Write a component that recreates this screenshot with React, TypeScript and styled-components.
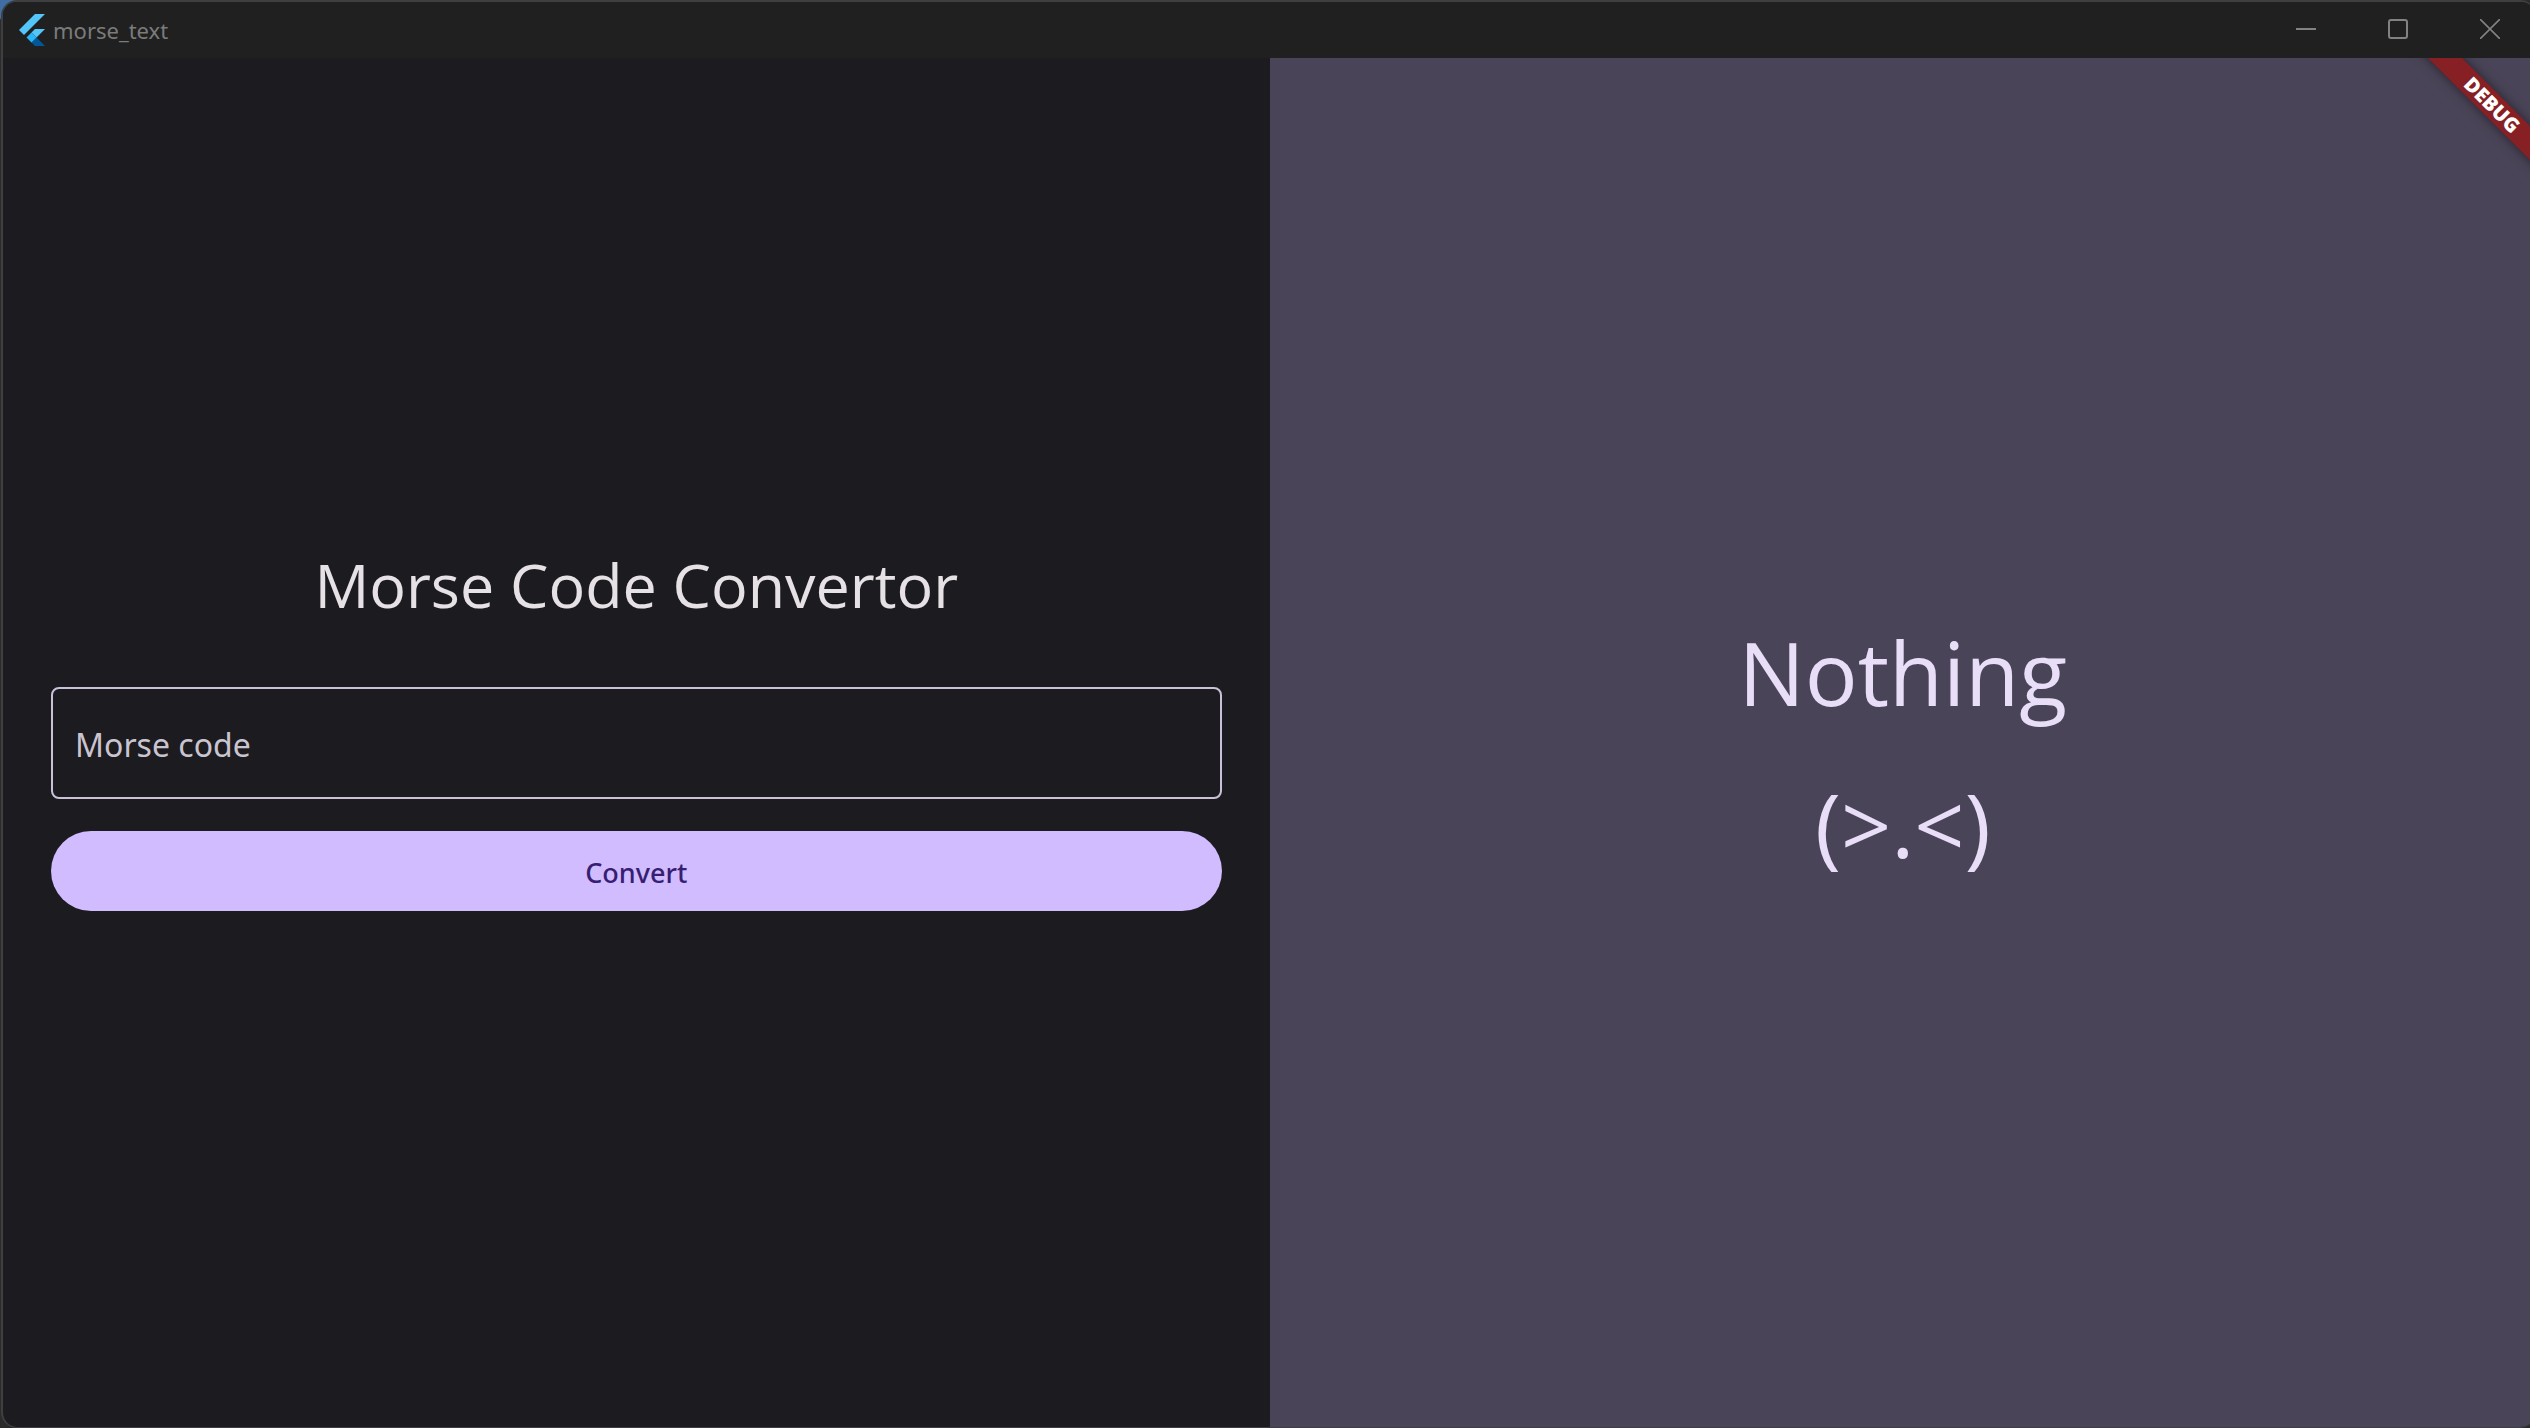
import React, { useState } from 'react';
import styled, { createGlobalStyle } from 'styled-components';

const GlobalStyle = createGlobalStyle`
  * { box-sizing: border-box; }
  body {
    margin: 0;
    background: #17171a;
    font-family: 'Open Sans', 'Noto Sans', sans-serif;
  }
`;

const Desktop = styled.div`
  display: flex;
  min-height: 100vh;
  overflow: hidden;
  background: radial-gradient(circle at 0 0, #3f6ea5 0 18px, #2b2b2b 20px);
  padding-left: 1px;
`;

/* The window runs slightly past the right edge of the desktop. */
const AppWindow = styled.div`
  flex: 1;
  display: flex;
  flex-direction: column;
  margin-right: -6px;
  border: 2px solid #3f3f42;
  border-right: 0;
  border-bottom-width: 1px;
  border-radius: 16px;
  overflow: hidden;
  background: #1c1b1f;
`;

const TitleBar = styled.header`
  display: flex;
  align-items: stretch;
  height: 56px;
  padding-left: 16px;
  background: #202020;
`;

const AppName = styled.div`
  flex: 1;
  display: flex;
  align-items: center;
  gap: 8px;
  font-family: 'Noto Sans', sans-serif;
  font-size: 22px;
  line-height: 32px;
  color: #7b7b7b;
`;

const WindowButton = styled.button`
  width: 92px;
  border: 0;
  padding: 0 0 2px;
  background: transparent;
  color: #828282;
  display: flex;
  align-items: center;
  justify-content: center;
`;

const Panes = styled.main`
  flex: 1;
  display: grid;
  grid-template-columns: 1fr 1fr;
`;

const InputPane = styled.form`
  display: flex;
  flex-direction: column;
  justify-content: center;
  padding: 0 48px 30px;
`;

const Title = styled.h1`
  margin: 0 0 62px;
  font-size: 61px;
  line-height: 80px;
  font-weight: 400;
  text-align: center;
  color: #e6e1e5;
`;

const CodeInput = styled.input`
  height: 112px;
  margin-bottom: 32px;
  padding: 4px 22px 0;
  border: 2px solid #cac0d8;
  border-radius: 8px;
  background: transparent;
  color: #e6e1e5;
  font-family: 'Noto Sans', sans-serif;
  font-size: 32px;
  outline: none;
  &::placeholder { color: #cac4d0; opacity: 1; }
`;

const ConvertButton = styled.button`
  height: 80px;
  padding: 4px 24px 0;
  border: 0;
  border-radius: 40px;
  background: #d0bcff;
  color: #381e72;
  font-family: 'Noto Sans', sans-serif;
  font-size: 27px;
  font-weight: 500;
`;

const ResultPane = styled.section`
  position: relative;
  overflow: hidden;
  display: flex;
  flex-direction: column;
  align-items: center;
  justify-content: center;
  gap: 48px;
  padding-top: 10px;
  background: #4a4458;
`;

const ResultText = styled.p`
  margin: 0;
  font-size: 88px;
  line-height: 104px;
  color: #e8def8;
`;

const DebugRibbon = styled.div`
  position: absolute;
  top: 35px;
  right: -56px;
  width: 200px;
  height: 24px;
  transform: rotate(45deg);
  background: #862024;
  box-shadow: 0 0 12px rgba(0, 0, 0, 0.5);
  color: #fff;
  font-family: 'Noto Sans', sans-serif;
  font-size: 20px;
  line-height: 24px;
  font-weight: 900;
  text-align: center;
`;

const FlutterLogo = () => (
  <svg width="26" height="32" viewBox="0 0 26 32" aria-hidden="true">
    <path d="M16 0H26L5 21L0 16Z" fill="#54c5f8" />
    <path d="M16 15H26L17.5 23.5L12.5 18.5Z" fill="#54c5f8" />
    <path d="M12.5 28.5L17.5 23.5L26 32H16Z" fill="#01579b" />
    <path d="M7.5 23.5L12.5 18.5L17.5 23.5L12.5 28.5Z" fill="#29b6f6" />
  </svg>
);

export default function App() {
  const [code, setCode] = useState('');
  return (
    <>
      <GlobalStyle />
      <Desktop>
        <AppWindow>
          <TitleBar>
            <AppName>
              <FlutterLogo />
              <span>morse_text</span>
            </AppName>
            <WindowButton type="button" aria-label="Minimize">
              <svg width="20" height="20" viewBox="0 0 20 20"><path d="M0 10H20" stroke="currentColor" strokeWidth="2" /></svg>
            </WindowButton>
            <WindowButton type="button" aria-label="Maximize">
              <svg width="20" height="20" viewBox="0 0 20 20"><rect x="1" y="1" width="18" height="18" rx="2" fill="none" stroke="currentColor" strokeWidth="2" /></svg>
            </WindowButton>
            <WindowButton type="button" aria-label="Close">
              <svg width="20" height="20" viewBox="0 0 20 20"><path d="M0 0L20 20M20 0L0 20" stroke="currentColor" strokeWidth="1.6" /></svg>
            </WindowButton>
          </TitleBar>
          <Panes>
            <InputPane onSubmit={(e) => e.preventDefault()}>
              <Title>Morse Code Convertor</Title>
              <CodeInput
                aria-label="Morse code"
                placeholder="Morse code"
                value={code}
                onChange={(e) => setCode(e.target.value)}
              />
              <ConvertButton type="submit">Convert</ConvertButton>
            </InputPane>
            <ResultPane>
              <ResultText>Nothing</ResultText>
              <ResultText>(&gt;.&lt;)</ResultText>
              <DebugRibbon>DEBUG</DebugRibbon>
            </ResultPane>
          </Panes>
        </AppWindow>
      </Desktop>
    </>
  );
}
